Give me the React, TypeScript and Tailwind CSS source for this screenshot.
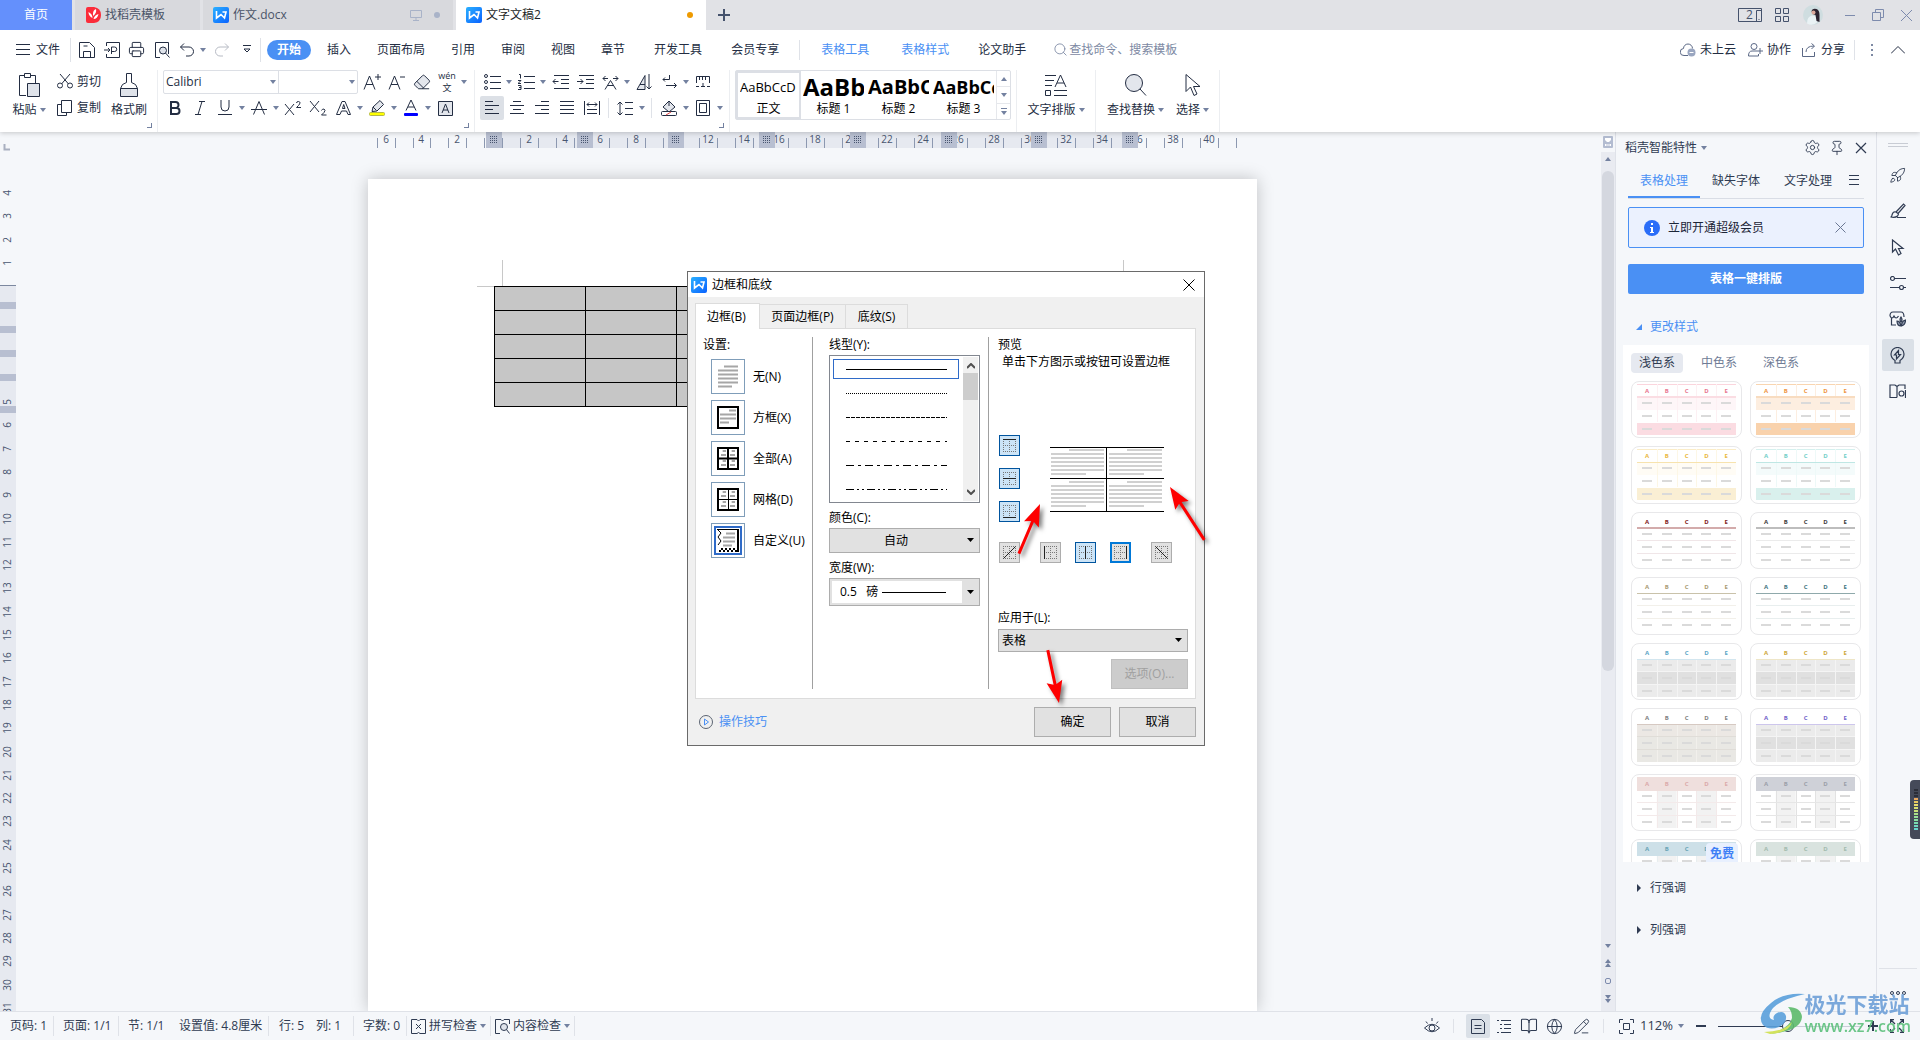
import type { ReactNode } from 'react'
import {
  BookOpen, Eraser, Globe, PencilLine, Pin, Printer, Rocket, Search, Settings,
} from 'lucide-react'
import clsx from 'clsx'

const menus = ['插入', '页面布局', '引用', '审阅', '视图', '章节']

const styleCells = [
  { sample: 'AaBbCcD', label: '正文', font: 'text-[13px]' },
  { sample: 'AaBb', label: '标题 1', font: 'text-2xl font-bold' },
  { sample: 'AaBbC', label: '标题 2', font: 'text-xl font-bold' },
  { sample: 'AaBbCc', label: '标题 3', font: 'text-lg font-bold' },
]

type Theme = {
  text: string
  rule: string
  ruleH?: number
  top?: string
  head?: string
  rows?: string[]
  h?: string
  v?: string
  cols?: string
}

const themes: Theme[] = [
  { text: '#e8758f', rule: '#fbdde3', ruleH: 2, top: '#fbd5dd', rows: ['#fef6f8', '#ffffff', '#fbdce2'], v: '#fdf0f3' },
  { text: '#ee9440', rule: '#f8dcc0', ruleH: 2, top: '#f9d5b0', rows: ['#fdeee0', '#ffffff', '#f9d2ac'], v: '#fdeee0' },
  { text: '#e9b840', rule: '#f7e3ae', top: '#faecc8', rows: ['#fffcf5', '#ffffff', '#faefd4'], v: '#fdf7e6' },
  { text: '#74cfc8', rule: '#bfe7e4', top: '#d5f0ee', rows: ['#f4fbfb', '#ffffff', '#d9f0ed'], v: '#eef9f8' },
  { text: '#801818', rule: '#d3abab', ruleH: 2, h: '#f0e6e8' },
  { text: '#3c3c3c', rule: '#bdbdbd', ruleH: 2, h: '#ebebeb' },
  { text: '#a89a72', rule: '#c9c2aa', h: '#f2f0ea' },
  { text: '#3f7580', rule: '#8fa9ab', h: '#e8eeee' },
  { text: '#5aa5c6', rule: '#d3e6ef', rows: ['#ebebeb', '#e0e0e0', '#ebebeb'], v: '#f4f4f4', h: '#f4f4f4' },
  { text: '#cda73a', rule: '#eee6c8', rows: ['#ebebeb', '#e0e0e0', '#ebebeb'], v: '#f4f4f4', h: '#f4f4f4' },
  { text: '#7e7e7e', rule: '#d6c9c2', rows: ['#ece8e4', '#e9e8e4', '#e9e8e4'], v: '#f2f0ec', h: '#e0ddd8' },
  { text: '#7161c8', rule: '#cdc6ec', rows: ['#ebebeb', '#e0e0e0', '#ebebeb'], v: '#f4f4f4', h: '#f4f4f4' },
  { text: '#dbaaaa', rule: '#efdfdd', head: '#efdfdd', h: '#f3eaea', v: '#f3eaea', cols: '#f2f2f2' },
  { text: '#9b9fa8', rule: '#cfd1d8', head: '#cfd1d8', h: '#e6e6e6', v: '#e2e2e2', cols: '#f2f2f2' },
  { text: '#68a3b5', rule: '#cde0e8', head: '#cde0e8', h: '#e8eef0', v: '#e8eef0', cols: '#f2f2f2' },
  { text: '#a3bbae', rule: '#d9e3df', head: '#d9e3df', h: '#e8eeec', v: '#e8eeec', cols: '#f2f2f2' },
]

function Svg({ w = 18, h = 18, sw = 1, className, children }: { w?: number; h?: number; sw?: number; className?: string; children: ReactNode }) {
  return (
    <svg width={w} height={h} viewBox={`0 0 ${w} ${h}`} fill="none" stroke="currentColor" strokeWidth={sw} className={clsx('shrink-0', className)}>
      {children}
    </svg>
  )
}

function Caret({ className }: { className?: string }) {
  return (
    <svg width="6" height="4" viewBox="0 0 6 4" className={clsx('shrink-0 text-[#7381a0]', className)}>
      <path d="M0 0h6L3 4z" fill="currentColor" />
    </svg>
  )
}

function Divider({ className }: { className?: string }) {
  return <span className={clsx('w-px shrink-0 bg-[#dfe2e8]', className)} />
}

function WpsLogo() {
  return (
    <svg width="16" height="16" viewBox="0 0 16 16" className="shrink-0">
      <defs>
        <linearGradient id="wps" x1="0" y1="0" x2="1" y2="1">
          <stop offset="0" stopColor="#2bb0ff" />
          <stop offset="1" stopColor="#0a62ff" />
        </linearGradient>
      </defs>
      <rect width="16" height="16" rx="2" fill="url(#wps)" />
      <path d="M3.500 4v7L8 7.500l3.500 3.500L13 5H9.500" fill="none" stroke="#fff" strokeWidth="1.600" />
    </svg>
  )
}

function Tool({ label, caret, active, children }: { label: string; caret?: boolean; active?: boolean; children: ReactNode }) {
  return (
    <button aria-label={label} className="flex h-6 shrink-0 items-center">
      <span className={clsx('flex h-6 w-6 items-center justify-center rounded-xs', active && 'bg-[#dce0e6]')}>{children}</span>
      {caret && <span className="flex w-[9px] justify-center"><Caret /></span>}
    </button>
  )
}

function Corner() {
  return (
    <div className="flex justify-end pt-[3px]">
      <span className="h-[5px] w-[5px] border-r border-b border-[#7381a0]" />
    </div>
  )
}

function TitleBar() {
  return (
    <div className="flex h-[30px] bg-[#e1e2e6]">
      <button className="w-[72px] bg-[#6490fc] text-white">首页</button>
      <button className="ml-[3px] flex w-[125px] items-center gap-1 bg-[#d8d9dd] pl-[11px] text-[#4a5468]">
        <svg width="15" height="16" viewBox="0 0 15 16">
          <path d="M0 2q0-2 2-2h6q7 1 7 8t-7 8H2q-2 0-2-2z" fill="#fb2c3a" />
          <path d="M7 13V7q0-4 3-5 1 4-3 7M6.500 11Q2.500 9 2.500 5q4 2 4 6M7.500 12q4 0 5-5-4 1-5 5" fill="#fff" />
        </svg>
        找稻壳模板
      </button>
      <button className="ml-[3px] flex w-[250px] items-center gap-1 bg-[#d8d9dd] pl-[10px] text-[#4a5468]">
        <WpsLogo />
        作文.docx
        <span className="flex-1" />
        <Svg w={12} h={12} className="text-[#a9b3c8]">
          <path d="M.5 1.500h11v7H.5zM6 8.500v3M3 11.500h6" />
        </Svg>
        <span className="mr-[13px] ml-2 h-1.5 w-1.5 rounded-full bg-[#a9b3c8]" />
      </button>
      <button className="ml-[3px] flex w-[250px] items-center gap-1 bg-white pl-[10px] text-[#1c1f27]">
        <WpsLogo />
        文字文稿2
        <span className="flex-1" />
        <span className="mr-[13px] h-1.5 w-1.5 rounded-full bg-[#ee9a00]" />
      </button>
      <button aria-label="新建" className="ml-3 text-[#45526c]">
        <Svg w={12} h={12} sw={2}><path d="M6 0v12M0 6h12" /></Svg>
      </button>
      <div className="ml-auto flex items-center text-[#45526c]">
        <button aria-label="双页" className="relative mr-3">
          <Svg w={25} h={15}><path d="M.5.5h23v13H.5zM23.500 2.500h-5v11M20.500 11.500h1" /></Svg>
          <span className="absolute top-0 left-2 text-xs leading-[14px]">2</span>
        </button>
        <button aria-label="应用" className="mr-[14px]">
          <Svg w={14} h={14}><path d="M.5.5h5v5h-5zM8.500.5h5v5h-5zM.5 8.500h5v5h-5zM8.500 8.500h5v5h-5z" /></Svg>
        </button>
        <svg width="20" height="20" viewBox="0 0 20 20">
          <circle cx="10" cy="10" r="10" fill="#cfdde0" />
          <path d="M4 18.500q0-7 5-8l5 1v6q-5 4-10 1" fill="#eaf2f5" />
          <path d="M8.500 6q1-3 5-2 3 1 3 6v7l-3-1-1-6-3-1z" fill="#2c2330" />
          <circle cx="10.500" cy="7.500" r="2" fill="#dca99b" />
        </svg>
        <Divider className="mr-[8px] ml-[9px] h-5 bg-[#c9ccd3]" />
        <button aria-label="最小化" className="mx-1 text-[#7d8bad]"><Svg w={10} h={12}><path d="M0 6.500h10" /></Svg></button>
        <button aria-label="还原" className="ml-[13px] text-[#7d8bad]"><Svg w={12} h={12}><path d="M.5 3.500h8v8h-8zM3.500 3.500v-3h8v8h-3" /></Svg></button>
        <button aria-label="关闭" className="mr-2 ml-[17px] text-[#7d8bad]"><Svg w={11} h={11}><path d="m0 0 11 11M11 0 0 11" /></Svg></button>
      </div>
    </div>
  )
}

function MenuBar() {
  return (
    <div className="flex h-9 items-center pt-[3px]">
      <button className="flex items-center gap-[6px] pl-4">
        <Svg w={14} h={12}><path d="M0 .5h14M0 5.500h14M0 10.500h14" /></Svg>
        文件
      </button>
      <Divider className="ml-[10px] h-6" />
      <div className="flex items-center">
        <button aria-label="保存" className="ml-2"><Svg w={16} h={16}><path d="M.5.5h10l5 5v10H.5zM4.500 15.500v-6h7v6M4.500 4h4" /></Svg></button>
        <button aria-label="输出为PDF" className="ml-[9px]"><Svg w={16} h={16}><path d="M2.500 4V.5h13v15h-13V12M0 8h6M4 6l2 2-2 2M7.500 12V5h3a2 2 0 0 1 0 4.500H7.500" /></Svg></button>
        <button aria-label="打印" className="ml-2"><Printer size={17} strokeWidth={1.4} /></button>
        <button aria-label="打印预览" className="ml-[10px]"><Svg w={16} h={16}><path d="M5 15.500H.5V.5h13V12" /><circle cx="8" cy="8.500" r="3.500" fill="#dfe3ea" /><path d="m10.500 11 4 4.500" /></Svg></button>
        <button aria-label="撤销" className="ml-[9px] flex items-center gap-1.5">
          <Svg w={14} h={14}><path d="M4 .5.5 4 4 7.500M.5 4H9a4.500 4.500 0 0 1 0 9H6" /></Svg>
          <Caret />
        </button>
        <button aria-label="恢复" className="ml-[9px] text-[#b7bbc4]"><Svg w={14} h={14}><path d="M10 .5 13.500 4 10 7.500M13.500 4H5a4.500 4.500 0 0 0 0 9h3" /></Svg></button>
        <button aria-label="更多" className="ml-[14px]"><Svg w={8} h={9}><path d="M0 .5h8M1 4l3 3 3-3z" /></Svg></button>
      </div>
      <Divider className="mr-[6px] ml-[9px] h-6" />
      <button className="h-5 w-11 rounded-full bg-[#4a90f4] font-bold text-white">开始</button>
      <nav className="ml-[3px] flex">
        {menus.map((m) => <button key={m} className="px-[13px]">{m}</button>)}
        <button className="px-4">开发工具</button>
        <button className="pr-5 pl-[13px]">会员专享</button>
      </nav>
      <Divider className="h-5" />
      <button className="ml-[21px] text-[#4a90f4]">表格工具</button>
      <button className="ml-8 text-[#4a90f4]">表格样式</button>
      <button className="ml-[29px]">论文助手</button>
      <label className="ml-[27px] flex items-center gap-px text-[#7d89a3]">
        <Search size={15} strokeWidth={1.4} />
        <input aria-label="搜索" placeholder="查找命令、搜索模板" className="w-32 bg-transparent outline-none placeholder:text-[#7d89a3]" />
      </label>
      <div className="ml-auto flex items-center">
        <button className="flex items-center gap-1">
          <Svg w={16} h={14} className="text-[#5b6885]">
            <path d="M8 12.500H4a3.500 3.500 0 0 1-.5-7 4.500 4.500 0 0 1 9 0" />
            <circle cx="11.500" cy="9.500" r="4" fill="#9aa6c0" stroke="none" />
            <path d="M9.500 9.500h4" stroke="#fff" />
          </Svg>
          未上云
        </button>
        <button className="ml-3 flex items-center gap-1">
          <Svg w={15} h={14} className="text-[#5b6885]"><circle cx="6" cy="3.500" r="3" /><path d="M9 8H4Q.5 8 .5 13h10v-2M12 5v6M9 8h6" /></Svg>
          协作
        </button>
        <button className="ml-[11px] flex items-center gap-1">
          <Svg w={15} h={14} className="text-[#5b6885]"><path d="M.5 5v8.500h12V9M4 9q0-6 8-6M9.500.5 12.500 3l-3 3" /></Svg>
          分享
        </button>
        <Divider className="ml-[9px] h-5" />
        <button aria-label="菜单" className="ml-4 flex flex-col gap-[3px]">
          <i className="h-0.5 w-0.5 bg-[#7d89a3]" /><i className="h-0.5 w-0.5 bg-[#7d89a3]" /><i className="h-0.5 w-0.5 bg-[#7d89a3]" />
        </button>
        <button aria-label="折叠" className="mr-[15px] ml-[18px]"><Svg w={14} h={8}><path d="m0 7.500 7-7 7 7" /></Svg></button>
      </div>
    </div>
  )
}

function Lines({ x1, x2 }: { x1: number[]; x2: number[] }) {
  return (
    <Svg w={14} h={14}>
      {x1.map((x, i) => <path key={i} d={`M${x} ${i * 4 + 0.5}H${x2[i]}`} />)}
    </Svg>
  )
}

function Ribbon() {
  return (
    <div className="flex h-[66px] overflow-hidden pt-1">
      <div className="flex w-[158px] shrink-0 flex-col border-r border-[#eceef1] pr-[5px] pb-1">
        <div className="flex h-[50px]">
          <button className="ml-[12px] flex w-[34px] flex-col items-center pt-[3px]">
            <Svg w={22} h={24}>
              <path d="M7 2.500H1.500v20H8M13 2.500h4.500V10M6.500.5h6v4h-6z" />
              <path d="M9.500 10.500h12v13h-12z" fill="#dfe3ea" />
            </Svg>
            <span className="mt-[5px] flex items-center gap-[3px] leading-4">粘贴<Caret /></span>
          </button>
          <div className="ml-[11px] flex flex-col gap-[3px]">
            <button className="flex h-6 items-center gap-1">
              <Svg w={16} h={15}><path d="M3 0l8.500 10M13 0 4.500 10" /><circle cx="3" cy="11.500" r="2.500" /><circle cx="13" cy="11.500" r="2.500" /></Svg>
              剪切
            </button>
            <button className="flex h-6 items-center gap-1">
              <Svg w={16} h={16}><path d="M4.500.5h10v12h-10zM4.500 4.500h-4v11h9v-3" /></Svg>
              复制
            </button>
          </div>
          <button className="ml-[10px] flex flex-col items-center pt-[3px]">
            <Svg w={18} h={24}>
              <path d="M6.500 9.500v-9h5v9q5 1 6 6H.5q1-5 6-6z" />
              <path d="M.5 15.500h17v8H.5z" fill="#dfe3ea" />
            </Svg>
            <span className="mt-[5px] leading-4">格式刷</span>
          </button>
        </div>
        <Corner />
      </div>

      <div className="w-[317px] shrink-0 border-r border-[#eceef1] px-[5px]">
        <div className="flex">
          <div className="flex h-6 rounded-xs border border-[#dcdfe5]">
            <label className="flex w-[115px] items-center border-r border-[#dcdfe5]">
              <input aria-label="字体" defaultValue="Calibri" className="min-w-0 flex-1 pl-0.5 outline-none" />
              <Caret className="mr-0.5" />
            </label>
            <label className="flex w-[78px] items-center">
              <input aria-label="字号" className="min-w-0 flex-1 pl-1 outline-none" />
              <Caret className="mr-0.5" />
            </label>
          </div>
          <div className="ml-0.5 flex gap-px">
            <Tool label="增大字号"><Svg><path d="M1 16.500 6.500 3 12 16.500M3 11.500h7M15 1v6M12 4h6" /></Svg></Tool>
            <Tool label="减小字号"><Svg><path d="M1 16.500 6.500 3 12 16.500M3 11.500h7M12 4h5" /></Svg></Tool>
            <Tool label="清除格式"><Eraser size={18} strokeWidth={1.3} fill="#e3e6ec" /></Tool>
            <Tool label="拼音" caret>
              <span className="flex flex-col items-center text-[9px] leading-[12px]"><span>wén</span><span>文</span></span>
            </Tool>
          </div>
        </div>
        <div className="mt-0.5 flex gap-px">
          <Tool label="加粗"><Svg w={12} h={14} sw={2}><path d="M2 1h4.500a3 3 0 0 1 0 6H2zM2 7h5.500a3 3 0 0 1 0 6H2z" /></Svg></Tool>
          <Tool label="倾斜"><Svg w={10} h={14}><path d="M4 .5h6M0 13.500h6M7 .5l-4 13" /></Svg></Tool>
          <Tool label="下划线" caret><Svg w={14} h={16}><path d="M3 0v7q0 4 4 4t4-4V0M0 14.500h14" /></Svg></Tool>
          <Tool label="删除线" caret><Svg w={16} h={14}><path d="M2.500 13.500 8 .5l5.500 13M0 8.500h16" /></Svg></Tool>
          <Tool label="上标"><Svg w={18} h={15}><path d="m1 3 9 11M10 3 1 14M12.500 2q0-1.500 2-1.500 3 .5 0 4l-2 2h4.500" /></Svg></Tool>
          <Tool label="下标"><Svg w={18} h={16}><path d="m1 1 9 11M10 1 1 12M12.500 10.500Q13 9 15 9q2 1 0 3.500l-2.500 2.500h5" /></Svg></Tool>
          <Tool label="文字效果" caret><Svg w={15} h={14}><path d="M.5 13.500 6 .5h3l5.500 13H12L10.500 10h-5L4 13.500zM6.500 7.500h2.500L7.700 3.500z" /></Svg></Tool>
          <Tool label="突出显示" caret>
            <Svg w={16} h={17}>
              <path d="M3 11.500 4 7l7-6.500 3.500 4L8 11zM4 7l3.500 3.500" fill="#e3e6ec" />
              <rect x=".5" y="12.500" width="15" height="3" rx="1" fill="#ffff00" stroke="#b5b84a" />
            </Svg>
          </Tool>
          <Tool label="字体颜色" caret>
            <Svg w={14} h={16}><path d="M2 10.500 7 0l5 10.500M4 7h6" /><rect y="13" width="14" height="3" rx="1" fill="#0000ff" stroke="none" /></Svg>
          </Tool>
          <Tool label="字符底纹"><Svg w={15} h={15}><path d="M.5.5h14v14H.5z" fill="#e3e6ec" /><path d="m4 12 3.500-9L11 12M5 9h5" /></Svg></Tool>
        </div>
        <Corner />
      </div>

      <div className="w-[255px] shrink-0 border-r border-[#eceef1] px-[5px]">
        <div className="flex gap-px">
          <Tool label="项目符号" caret>
            <Svg w={17} h={16}><circle cx="2" cy="2" r="1.500" /><circle cx="2" cy="8" r="1.500" /><circle cx="2" cy="14" r="1.500" /><path d="M6 2.500h11M6 8.500h11M6 14.500h11" /></Svg>
          </Tool>
          <Tool label="编号" caret>
            <Svg w={17} h={16}><path d="M1 .5h1.500v4M0 6.500h3l-3 3h3M0 11.500h3v4H0M1 13.500h2M6 2.500h11M6 8.500h11M6 14.500h11" /></Svg>
          </Tool>
          <Tool label="减少缩进"><Svg w={17} h={14}><path d="M2 .5h15M9 4.500h8M9 8.500h8M2 13.500h15M6.500 6.500H1M3.500 4 1 6.500 3.500 9" /></Svg></Tool>
          <Tool label="增加缩进"><Svg w={17} h={14}><path d="M2 .5h15M9 4.500h8M9 8.500h8M2 13.500h15M0 6.500h6M3.500 4 6 6.500 3.500 9" /></Svg></Tool>
          <Tool label="中文版式" caret><Svg w={17} h={15}><path d="M1 3.500h5M11 3.500h5M3.500 1 1 3.500 3.500 6M13.500 1 16 3.500 13.500 6M3 14.500l5.500-9 5.500 9M5.500 10.500h6" /></Svg></Tool>
          <Tool label="排序"><Svg w={16} h={16}><path d="M1 15.500h8v-14zM4 10.500h5" fill="#e3e6ec" /><path d="M13 0v15M10.500 12.500l2.500 2.500 2.500-2.500" /></Svg></Tool>
          <Tool label="换行" caret><Svg w={15} h={14}><path d="M7.500 0v4.500H1M3 2.500l-2 2 2 2M4 10.500h10M12 8l2.500 2.500L12 13" /></Svg></Tool>
          <Tool label="制表位"><Svg w={14} h={12}><path d="M.5 7V.5h13V7M3.500 1v3M6.500 1v3M9.500 1v3M0 10.500h3M5 10.500h4M11 10.500h3M7 10V7" /></Svg></Tool>
        </div>
        <div className="mt-0.5 flex items-center gap-px">
          <Tool label="左对齐" active><Lines x1={[0, 0, 0, 0]} x2={[8, 14, 8, 14]} /></Tool>
          <Tool label="居中"><Lines x1={[3, 0, 3, 0]} x2={[11, 14, 11, 14]} /></Tool>
          <Tool label="右对齐"><Lines x1={[6, 0, 6, 0]} x2={[14, 14, 14, 14]} /></Tool>
          <Tool label="两端对齐"><Lines x1={[0, 0, 0, 0]} x2={[14, 14, 14, 14]} /></Tool>
          <Tool label="分散对齐"><Svg w={16} h={14}><path d="M.5 0v14M15.500 0v14M3 3.500h10M5 1.500l-2 2 2 2M11 1.500l2 2-2 2M3 8.500h10M3 12.500h10" /></Svg></Tool>
          <Divider className="mx-[3px] h-5" />
          <Tool label="行距" caret><Svg w={16} h={15}><path d="M3 1v13M.5 3.500 3 1l2.500 2.500M.5 11.500 3 14l2.500-2.500M8 1.500h8M8 7.500h8M8 13.500h8" /></Svg></Tool>
          <Divider className="mx-1 h-5" />
          <Tool label="底纹颜色" caret>
            <Svg w={17} h={16}><path d="m2 7 6-6 6 6-6 5zM8 1v5" fill="#e3e6ec" /><rect x=".5" y="11.500" width="15" height="4" rx="1" fill="#fff" /><path d="m5 15 5-3" stroke="#e04848" /></Svg>
          </Tool>
          <Tool label="边框" caret><Svg w={14} h={16}><path d="M.5.5h13v15H.5z" /><path d="M3.500 3.500h7v9h-7z" /></Svg></Tool>
        </div>
        <Corner />
      </div>

      <div className="shrink-0 border-r border-[#eceef1] px-[5px]">
        <div className="flex h-[50px] rounded-xs border border-[#dcdfe5] text-black">
          {styleCells.map((s, i) => (
            <button key={s.label} className={clsx('flex w-[65px] flex-col items-center px-0.5', i === 0 && 'border-2 border-[#dcdfe5] px-0')}>
              <span className={clsx('w-full overflow-hidden text-left whitespace-nowrap', i === 0 ? 'h-7 leading-7' : 'h-[30px] leading-8', s.font)}>{s.sample}</span>
              <span className="leading-4">{s.label}</span>
            </button>
          ))}
          <div className="flex w-[14px] flex-col divide-y divide-[#e6e8ec] border-l border-[#e6e8ec]">
            <button aria-label="上一行" className="flex flex-1 items-center justify-center"><Caret className="rotate-180" /></button>
            <button aria-label="下一行" className="flex flex-1 items-center justify-center"><Caret /></button>
            <button aria-label="更多样式" className="flex flex-1 flex-col items-center justify-center gap-0.5"><i className="h-px w-1.5 bg-[#7381a0]" /><Caret /></button>
          </div>
        </div>
      </div>

      <div className="flex h-[62px] w-[79px] shrink-0 justify-center border-r border-[#eceef1]">
        <button className="flex flex-col items-center pt-1">
          <Svg w={24} h={22}><path d="M1 1.500h11M1 6.500h9M1 11.500h7M1.500 16.500h5v5h-5zM10 16.500h13M10 21.500h13M11 13l5.500-12L22 13M13 9h7" /></Svg>
          <span className="mt-[6px] flex items-center gap-[3px] leading-4">文字排版<Caret /></span>
        </button>
      </div>
      <div className="flex h-[62px] shrink-0 gap-3 border-r border-[#eceef1] pr-[10px] pl-[11px]">
        <button className="flex flex-col items-center pt-1">
          <Svg w={23} h={22}><circle cx="10" cy="9" r="8.500" fill="#e3e6ec" /><path d="m16 15 6 6.500" /></Svg>
          <span className="mt-[6px] flex items-center gap-[3px] leading-4">查找替换<Caret /></span>
        </button>
        <button className="flex flex-col items-center pt-1">
          <Svg w={16} h={22}><path d="M1 .5v17l4.500-4.500L9 21.500l3-1.500-3.500-7.500H15z" /></Svg>
          <span className="mt-[6px] flex items-center gap-[3px] leading-4">选择<Caret /></span>
        </button>
      </div>
    </div>
  )
}

function HorizontalRuler() {
  const step = 17.9
  const ticks = Array.from({ length: 49 }, (_, i) => i - 7)
  return (
    <svg width="889" height="16" className="block">
      <rect x="134" width="622" height="16" fill="#e6e9f0" />
      {ticks.map((t) => (
        <rect key={t} x={Math.round(134 + t * step)} y="6" width="1" height="10" fill="#8c98b0" />
      ))}
      {ticks.map((t) => t % 2 === 0 && t !== 0 && t !== 10 && t < 41 && (
        <text key={t} x={Math.round(125 + t * step)} y="11" textAnchor="middle" fontSize="10" fill="#48556f">{Math.abs(t)}</text>
      ))}
      {Array.from({ length: 8 }, (_, i) => Math.round(118 + i * 90.9)).map((x) => (
        <g key={x}>
          <rect x={x} width="16" height="16" fill="#b8bfd1" />
          {[5, 7, 9, 11].map((y) => (
            <path key={y} d={`M${x + 4} ${y - 0.5}h8`} stroke="#48556f" strokeDasharray="1 1" />
          ))}
        </g>
      ))}
    </svg>
  )
}

function VerticalRuler() {
  const marks = [
    ...[4, 3, 2, 1].map((n) => ({ n, y: 131 - Math.round((n - 1) * 23.3) })),
    ...Array.from({ length: 27 }, (_, i) => ({ n: i + 5, y: Math.round(270 + i * 23.3) })),
  ]
  return (
    <svg width="16" className="block h-full shrink-0">
      <path d="M4.500 12v5.500H10" stroke="#a9b0c0" strokeWidth="2" fill="none" />
      <rect y="153" width="16" height="100%" fill="#e6e9f0" />
      <rect y="153" width="16" height="1" fill="#7c889f" />
      {[170, 194, 218, 242, 274].map((y) => <rect key={y} y={y} width="16" height="7" fill="#b8bfd1" />)}
      {marks.map((m) => (
        <text key={m.n} transform={`translate(11 ${m.y}) rotate(-90)`} textAnchor="middle" fontSize="10" fill="#48556f">{m.n}</text>
      ))}
    </svg>
  )
}

function DocumentArea() {
  return (
    <div className="flex min-w-0 flex-1 justify-center overflow-hidden pl-2">
      <div className="flex w-[889px] shrink-0 flex-col">
        <HorizontalRuler />
        <div className="mt-[31px] flex-1 bg-white pt-[81px] shadow-[0_0_16px_rgba(0,0,0,0.22)]">
          <div className="mr-[133px] ml-[134px] h-[26px] border-x border-[#c8c8c8]" />
          <div className="flex">
            <div className="ml-[109px] w-[17px] border-t border-[#c8c8c8]" />
            <table className="table-fixed border-collapse bg-[#c6c6c6]">
              <tbody>
                {[0, 1, 2, 3, 4].map((r) => (
                  <tr key={r}>
                    {[0, 1, 2, 3, 4, 5, 6].map((c) => <td key={c} className="h-6 w-[91px] min-w-[91px] border border-black p-0" />)}
                  </tr>
                ))}
              </tbody>
            </table>
          </div>
        </div>
      </div>
    </div>
  )
}

function ScrollBar() {
  return (
    <div className="flex w-[14px] shrink-0 flex-col items-center bg-[#e9ebf1] text-[#7d8bad]">
      <div className="flex h-5 w-full items-center justify-center bg-[#f5f7fa]">
        <svg width="10" height="12"><rect width="10" height="12" rx="1" fill="#b3bcd1" /><path d="M2 2h6v2L6 6H4L2 4zM2 8h1.500v2H2zM4.500 8h1v2h-1zM6.500 8H8v2H6.500z" fill="#fff" /></svg>
      </div>
      <Caret className="mt-[5px] rotate-180" />
      <div className="mt-[10px] h-[500px] w-3 rounded-full bg-[#d4d7df]" />
      <div className="mt-auto flex flex-col items-center gap-[11px] pb-2">
        <Caret />
        <span className="flex flex-col"><Caret className="rotate-180" /><Caret className="rotate-180" /></span>
        <span className="h-1.5 w-1.5 rounded-xs border border-[#7d8bad]" />
        <span className="flex flex-col"><Caret /><Caret /></span>
      </div>
    </div>
  )
}

function Thumb({ t }: { t: Theme }) {
  const w = 99 / 5
  return (
    <svg width="99" height="51" className="block">
      {t.head && <rect width="99" height="13" fill={t.head} />}
      {t.rows?.map((c, i) => <rect key={i} y={13 + i * 13} width="99" height={i === 2 ? 12 : 13} fill={c} />)}
      {t.cols && [1, 3].map((c) => <rect key={c} x={c * w} y="13" width={w} height="38" fill={t.cols} />)}
      {t.top && <rect width="99" height="1" fill={t.top} />}
      {t.v && [1, 2, 3, 4].map((c) => <rect key={c} x={Math.round(c * w)} y={t.rows && !t.h ? 0 : 13} width="1" height="38" fill={t.v} />)}
      {t.h && [25, 38].map((y) => <rect key={y} y={y} width="99" height="1" fill={t.h} />)}
      <rect y={t.ruleH ? 12 : 13} width="99" height={t.ruleH ?? 1} fill={t.rule} />
      {[0, 1, 2, 3, 4].map((c) => (
        <g key={c}>
          <text x={10 + c * w} y="9" textAnchor="middle" fontSize="6" fontWeight="700" fill={t.text}>{'ABCDE'[c]}</text>
          {[18, 31, 44].map((y) => <rect key={y} x={Math.round(5 + c * w)} y={y} width="10" height="2" fill="#dadada" />)}
        </g>
      ))}
    </svg>
  )
}

function TaskPane() {
  return (
    <aside className="flex w-[262px] shrink-0 flex-col border-x border-[#dfe2e9] text-[#2f3b52]">
      <div className="flex h-[30px] items-center px-[9px] pt-px">
        <button className="flex items-center gap-1">稻壳智能特性<Caret /></button>
        <button aria-label="设置" className="ml-auto"><Settings size={17} strokeWidth={1.3} /></button>
        <button aria-label="固定" className="ml-2"><Pin size={16} strokeWidth={1.4} /></button>
        <button aria-label="关闭" className="ml-[10px]"><Svg w={12} h={12} sw={1.2}><path d="m1 1 10 10M11 1 1 11" /></Svg></button>
      </div>
      <div className="mx-3 flex h-[37px] items-stretch border-b border-[#d9dde5] leading-[37px]">
        <button className="w-[72px] border-b-2 border-[#4a90f4] text-[#4a90f4]">表格处理</button>
        <button className="w-[72px]">缺失字体</button>
        <button className="w-[72px]">文字处理</button>
        <button aria-label="更多" className="pl-[5px]"><Svg w={10} h={10}><path d="M0 .5h10M0 4.500h10M0 9.500h10" /></Svg></button>
      </div>
      <div className="mx-3 mt-2 flex h-[41px] items-center rounded-xs border border-[#4a90f4] bg-[#ebf1fe] pl-[15px] text-[#1c2537]">
        <span className="mr-2 flex h-4 w-4 items-center justify-center rounded-full bg-[#2a6df8] text-white">
          <svg width="4" height="10"><path d="M1 0h2v2H1zM0 4h3v5h1v1H0V9h1V5H0z" fill="#fff" /></svg>
        </span>
        立即开通超级会员
        <button aria-label="关闭提示" className="mr-[17px] ml-auto text-[#6b7894]"><Svg w={11} h={11}><path d="m.5.5 10 10M10.500.5l-10 10" /></Svg></button>
      </div>
      <button className="mx-3 mt-4 h-[30px] rounded-xs bg-[#4a90f4] font-bold text-white">表格一键排版</button>
      <button className="mt-[23px] ml-5 flex h-5 items-center gap-2 text-[#4a90f4]">
        <svg width="6" height="6"><path d="M6 0v6H0z" fill="currentColor" /></svg>
        更改样式
      </button>
      <div className="mx-[7px] mt-2 h-[517px] overflow-hidden bg-white px-2 pt-2">
        <div className="flex h-5 leading-5 text-[#6f7c96]">
          <button className="w-[52px] rounded-sm bg-[#e6e9f0] text-[#2f3b52]">浅色系</button>
          <button className="ml-[18px]">中色系</button>
          <button className="ml-[26px]">深色系</button>
        </div>
        <div className="mt-2 grid grid-cols-2 gap-2">
          {themes.map((t, i) => (
            <button key={i} aria-label={`样式 ${i + 1}`} className={clsx('relative flex justify-center rounded-lg border border-[#e8e8ea] pt-0.5', i % 4 < 2 ? 'h-[57px]' : 'h-[58px]')}>
              <Thumb t={t} />
              {i === 14 && <span className="absolute top-[3px] right-[3px] h-[22px] w-8 rounded-sm bg-[#e8f0fe] leading-[21px] font-bold text-[#3f80f6]">免费</span>}
            </button>
          ))}
        </div>
      </div>
      {['行强调', '列强调'].map((label) => (
        <button key={label} className="mt-4 mb-[6px] ml-[21px] flex h-5 items-center gap-[9px]">
          <svg width="4" height="8"><path d="M0 0v8l4-4z" fill="currentColor" /></svg>
          {label}
        </button>
      ))}
    </aside>
  )
}

function SideStrip() {
  const cls = 'flex h-8 w-8 items-center justify-center rounded-xs'
  return (
    <div className="flex w-[43px] shrink-0 flex-col items-center pr-0.5 text-[#2f3b52]">
      <div className="mt-[11px] h-1 w-5 border-y border-[#c8ccd4]" />
      <div className="mt-3 flex flex-col gap-1">
        <button aria-label="快捷" className={cls}><Rocket size={17} strokeWidth={1.3} /></button>
        <button aria-label="画笔" className={cls}>
          <Svg w={16} h={16} sw={1.2}><path d="M6 9 13.500 1 15 2.500 8 10.500M6 9q-3-1-4 3 0 2-1.500 2 5 1 7-1 1.500-1.500.5-2.500zM7 14.500h9" /></Svg>
        </button>
        <button aria-label="选择" className={cls}>
          <Svg w={14} h={17} sw={1.2}><path d="M1.500 1v12l3-3 3 6 2.500-1.500-2.500-5H12z" /></Svg>
        </button>
        <button aria-label="属性" className={cls}>
          <Svg w={16} h={14} sw={1.2}><circle cx="2.500" cy="2.500" r="2" /><path d="M4.500 2.500H16M0 11.500h9M14 11.500h2" /><circle cx="11.500" cy="11.500" r="2" /></Svg>
        </button>
        <button aria-label="稻壳资源" className={cls}>
          <Svg w={17} h={16} sw={1.2}><path d="M2.500 7v7H7M1 5q0-4 3-4h8q3 0 3 5M1 5q2 4 4 0 2 4 4.500 0" /><path d="M8 10q3 0 4 5-4 0-4-5zM16.500 9q-4 1-4 6 4-1 4-6zM12 6q-2 3 0 5 2-2 0-5z" fill="#8f99ad" /></Svg>
        </button>
        <button aria-label="智能特性" className={clsx(cls, 'bg-[#dae0e7]')}>
          <Svg w={15} h={17} sw={1.2}><path d="M5 13.500Q1 11 1 7a6.500 6.500 0 0 1 13 0q0 4-4 6.500v2.500H5zM8.500 3.500 4.500 8h2v4l4-4.500h-2z" /></Svg>
        </button>
        <button aria-label="查找资料" className={cls}>
          <Svg w={17} h={15} sw={1.2}><path d="M8 13.500H1V1h5l2 1.500L10 1h6v4M8 2.500v11" /><circle cx="12.500" cy="9.500" r="2.500" /><path d="M16.500 6v8" /></Svg>
        </button>
      </div>
      <div className="mt-auto h-px w-[38px] bg-[#dfe2e8]" />
      <button aria-label="更多" className="mt-[22px] mb-4 flex gap-0.5">
        <i className="h-1 w-1 rounded-full border border-[#2f3b52]" /><i className="h-1 w-1 rounded-full border border-[#2f3b52]" /><i className="h-1 w-1 rounded-full border border-[#2f3b52]" />
      </button>
    </div>
  )
}

function StatusBar() {
  return (
    <footer className="flex h-[29px] shrink-0 items-center border-t border-[#dfe2e8] bg-[#f5f7fa] whitespace-nowrap text-[#2f3b52]">
      <span className="ml-[10px] w-[43px]">页码: 1</span>
      <Divider className="h-5" />
      <span className="ml-[9px] w-[55px]">页面: 1/1</span>
      <Divider className="h-5" />
      <span className="ml-[9px] w-[51px]">节: 1/1</span>
      <span className="w-[89px]">设置值: 4.8厘米</span>
      <Divider className="h-5" />
      <span className="ml-[10px] w-[37px]">行: 5</span>
      <span className="w-[37px]">列: 1</span>
      <Divider className="h-5" />
      <span className="ml-[9px] w-[43px]">字数: 0</span>
      <Divider className="h-5" />
      <button className="mx-1 flex items-center gap-[3px]">
        <Svg w={15} h={15}><path d="M6 .5H.5v14H6l1.500-1 1.500 1h5.500V.5H9L7.500 2zM5 5l5 5M10 5l-5 5" /></Svg>
        拼写检查<Caret />
      </button>
      <Divider className="h-5" />
      <button className="mx-1 flex items-center gap-[3px]">
        <Svg w={15} h={15}><path d="M5 14.500H.5V.5H6L7.500 2 9 .5h5.500V5" /><circle cx="9" cy="8" r="3.500" fill="#dfe3ea" /><path d="m11.500 10.500 3 4" /></Svg>
        内容检查<Caret />
      </button>
      <Divider className="h-5" />

      <div className="ml-auto flex items-center">
        <button aria-label="护眼模式"><Svg w={16} h={16}><path d="M.5 10Q8 2.500 15.500 10 8 17.500.5 10zM2 3.500l1.500 2M14 3.500l-1.500 2M8 0v3" /><circle cx="8" cy="10" r="3" /></Svg></button>
        <Divider className="ml-[13px] h-[14px]" />
        <button aria-label="页面视图" className="ml-3 flex h-6 w-6 items-center justify-center rounded-xs bg-[#dae0e7]">
          <Svg w={14} h={15}><path d="M.5.5h10l3 3v11H.5zM3.500 6.500h7M3.500 9.500h7" /></Svg>
        </button>
        <button aria-label="大纲" className="ml-[7px]"><Svg w={14} h={14}><path d="M0 1.500h2M4 1.500h10M3 5.500h2M7 5.500h7M3 9.500h2M7 9.500h7M0 13.500h2M4 13.500h10" /></Svg></button>
        <button aria-label="阅读版式" className="ml-[9px]"><BookOpen size={18} strokeWidth={1.4} /></button>
        <button aria-label="Web版式" className="ml-2"><Globe size={17} strokeWidth={1.4} /></button>
        <button aria-label="写作模式" className="ml-[10px]"><PencilLine size={17} strokeWidth={1.3} /></button>
        <Divider className="ml-[13px] h-[14px]" />
        <button aria-label="适应窗口" className="ml-[15px]"><Svg w={15} h={15}><path d="M.5 4V.5H4M11 .5h3.500V4M14.500 11v3.500H11M4 14.500H.5V11M4.500 4.500h6v6h-6z" /></Svg></button>
        <button className="ml-[6px] flex items-center gap-[5px] text-[13px]">112%<Caret /></button>
        <button aria-label="缩小" className="ml-3"><Svg w={10} h={12} sw={2}><path d="M0 6h10" /></Svg></button>
        <input
          type="range"
          aria-label="缩放"
          defaultValue={49}
          className="ml-3 h-3 w-[143px] appearance-none bg-[linear-gradient(to_right,#2f3b52_50%,#c9ced8_50%)] bg-[length:100%_1px] bg-center bg-no-repeat [&::-webkit-slider-thumb]:h-3 [&::-webkit-slider-thumb]:w-3 [&::-webkit-slider-thumb]:appearance-none [&::-webkit-slider-thumb]:rounded-full [&::-webkit-slider-thumb]:border [&::-webkit-slider-thumb]:border-[#2f3b52] [&::-webkit-slider-thumb]:bg-[#f5f7fa]"
        />
        <button aria-label="放大" className="ml-[7px]"><Svg w={10} h={10} sw={2}><path d="M5 0v10M0 5h10" /></Svg></button>
        <button aria-label="全屏" className="mr-4 ml-3"><Svg w={14} h={14} sw={1.3}><path d="M.5 4V.5H4M10 .5h3.500V4M13.500 10v3.500H10M4 13.500H.5V10M1 1l4 4M13 1 9 5M1 13l4-4M13 13 9 9" /></Svg></button>
      </div>
    </footer>
  )
}

function CellText({ x, y, w }: { x: number; y: number; w: number }) {
  return <path d={`M${x + w / 3} ${y}h${(w * 2) / 3}M${x} ${y + 4}h${w}`} stroke="#a6a6a6" strokeWidth="2" />
}

const presets = [
  { label: '无(N)', art: <path d="M12 6.500h14M6 10.500h20M6 14.500h20M6 18.500h20M6 22.500h20M6 26.500h14" stroke="#a6a6a6" strokeWidth="2" /> },
  {
    label: '方框(X)',
    art: <><rect x="6" y="6" width="20" height="21" stroke="#000" strokeWidth="2" /><path d="M17 9.500h7M8 13.500h16M8 17.500h16M8 21.500h9" stroke="#a6a6a6" strokeWidth="2" /></>,
  },
  {
    label: '全部(A)',
    art: (
      <>
        <CellText x={9} y={9} w={5} /><CellText x={18} y={9} w={5} /><CellText x={9} y={19} w={5} /><CellText x={18} y={19} w={5} />
        <path d="M6 6h20v21H6zM16 6v21M6 16.500h20" stroke="#000" strokeWidth="2" />
      </>
    ),
  },
  {
    label: '网格(D)',
    art: (
      <>
        <CellText x={9} y={9} w={5} /><CellText x={18} y={9} w={5} /><CellText x={9} y={19} w={5} /><CellText x={18} y={19} w={5} />
        <rect x="6" y="6" width="20" height="21" stroke="#000" strokeWidth="2" />
        <path d="M16.500 6v21M6 16.500h20" stroke="#000" />
      </>
    ),
  },
  {
    label: '自定义(U)',
    art: (
      <>
        <rect x="3" y="3" width="26" height="27" stroke="#2f6bc8" strokeWidth="2" />
        <path d="M5 5.500h20" stroke="#000" />
        <path d="m6 6 3 3-3 4 3 4-3 4" stroke="#000" />
        <path d="M26 5v23" stroke="#000" strokeWidth="2" />
        <path d="M7 27h18M9 25h16" stroke="#000" strokeWidth="2" strokeDasharray="2 2" />
        <path d="M14 9.500h9M11 13.500h12M11 17.500h12M11 21.500h9" stroke="#a6a6a6" strokeWidth="2" />
      </>
    ),
  },
]

const dashes = ['', '1 1', '4 1', '4 5', '8 4 3 4', '8 3 2 3 2 3']

function EdgeButton({ d, state, label }: { d: string; state: 'on' | 'off' | 'focus'; label: string }) {
  return (
    <button
      aria-label={label}
      className={clsx(
        'flex h-[21px] w-[21px] shrink-0 items-center justify-center',
        state === 'on' && 'border border-[#00549e] bg-[#cce4f7]',
        state === 'off' && 'border border-[#adadad] bg-[#e1e1e1]',
        state === 'focus' && 'border-2 border-[#0078d7] bg-[#e1e1e1]',
      )}
    >
      <Svg w={15} h={15} className="text-[#222]">
        <path d="M1 1.500h13M1 13.500h13M1.500 1v13M13.500 1v13M7.500 1v13M1 7.500h13" stroke="#777" strokeDasharray="1 1" />
        <path d={d} />
      </Svg>
    </button>
  )
}

function BlackCaret({ className }: { className?: string }) {
  return <svg width="7" height="4" viewBox="0 0 7 4" className={className}><path d="M0 0h7L3.500 4z" /></svg>
}

function PreviewText({ x, y }: { x: number; y: number }) {
  return <path d={`M${x + 18} ${y}h35M${x} ${y + 4}h53M${x} ${y + 8}h53M${x} ${y + 12}h53M${x} ${y + 16}h53M${x} ${y + 20}h53M${x} ${y + 24}h35`} stroke="#d0d0d0" strokeWidth="2" />
}

function BorderDialog() {
  return (
    <div role="dialog" aria-label="边框和底纹" className="absolute top-[271px] left-[687px] z-20 w-[518px] border border-[#6a6a6a] bg-[#f0f0f0] text-black">
      <div className="flex h-[25px] items-center gap-[5px] bg-white pl-[3px]">
        <WpsLogo />
        边框和底纹
        <button aria-label="关闭" className="mr-[9px] ml-auto"><Svg w={12} h={12}><path d="m.5.5 11 11M11.500.5l-11 11" /></Svg></button>
      </div>
      <div className="flex items-end px-[7px] pt-[6px]">
        <button className="relative z-10 -mb-px h-[26px] w-[65px] border border-b-0 border-[#dcdcdc] bg-white pr-0.5">边框(B)</button>
        <button className="h-6 w-[86px] border border-b-0 border-l-0 border-[#dcdcdc]">页面边框(P)</button>
        <button className="h-6 w-[62px] border border-b-0 border-l-0 border-[#dcdcdc]">底纹(S)</button>
      </div>
      <div className="mr-2 ml-[7px] flex h-[371px] border border-[#dcdcdc] bg-white pt-2 pb-[9px]">
        <div className="w-[117px] shrink-0 border-r border-[#a0a0a0] pl-[7px]">
          <div className="h-[22px] leading-4">设置:</div>
          <div className="ml-2 flex flex-col gap-[6px]">
            {presets.map((p) => (
              <button key={p.label} className="flex items-center gap-2 whitespace-nowrap">
                <svg width="34" height="35" fill="none" className="shrink-0 border border-[#7f9db9]" viewBox="0 0 32 33">{p.art}</svg>
                {p.label}
              </button>
            ))}
          </div>
        </div>

        <div className="w-[176px] shrink-0 border-r border-[#a0a0a0] pr-2 pl-4">
          <div className="h-[18px] leading-4">线型(Y):</div>
          <div className="flex h-[148px] border border-[#828790] p-px">
            <div className="flex flex-1 flex-col gap-1 overflow-hidden px-0.5 pt-0.5">
              {dashes.map((d, i) => (
                <button key={i} aria-label={`线型 ${i + 1}`} className={clsx('flex h-5 w-[126px] shrink-0 items-center justify-center border', i === 0 ? 'border-[#2f6bc8]' : 'border-transparent')}>
                  <svg width="101" height="1"><path d="M0 .5h101" stroke="#000" strokeDasharray={d} /></svg>
                </button>
              ))}
            </div>
            <div className="flex w-[15px] flex-col items-center bg-[#f0f0f0] py-[6px] text-[#505050]">
              <Svg w={8} h={6} sw={2}><path d="m0 5 4-4 4 4" /></Svg>
              <div className="mt-1 h-[27px] w-full bg-[#cdcdcd]" />
              <Svg w={8} h={6} sw={2} className="mt-auto"><path d="m0 1 4 4 4-4" /></Svg>
            </div>
          </div>
          <label className="mt-[7px] block h-[18px] leading-4" htmlFor="line-color">颜色(C):</label>
          <div className="relative">
            <select id="line-color" className="block h-[25px] w-full appearance-none border border-[#adadad] bg-[#e1e1e1] pl-[54px]"><option>自动</option></select>
            <BlackCaret className="pointer-events-none absolute top-[10px] right-[6px]" />
          </div>
          <label className="mt-[7px] block h-[18px] leading-4" htmlFor="line-width">宽度(W):</label>
          <div className="flex h-7 items-center border border-[#adadad] bg-[#e1e1e1] pr-[5px] pl-0.5">
            <div className="flex h-[22px] w-[130px] items-center bg-white pl-2">
              <select id="line-width" className="w-[42px] appearance-none bg-transparent whitespace-pre"><option>{'0.5\u00a0\u00a0\u00a0磅'}</option></select>
              <i className="h-px w-16 bg-black" />
            </div>
            <BlackCaret className="ml-auto" />
          </div>
        </div>

        <div className="flex-1 pr-[7px] pl-[9px]">
          <div className="leading-4">预览</div>
          <div className="h-[82px] pl-1 leading-[18px]">单击下方图示或按钮可设置边框</div>
          <div className="flex pl-px">
            <div className="flex flex-col gap-3">
              <EdgeButton label="上边框" state="on" d="M1 1.500h13" />
              <EdgeButton label="内部横线" state="on" d="M1 7.500h13" />
              <EdgeButton label="下边框" state="on" d="M1 13.500h13" />
            </div>
            <svg width="114" height="66" className="mt-[11px] ml-[30px]">
              <PreviewText x={1} y={4} /><PreviewText x={59} y={4} /><PreviewText x={1} y={36} /><PreviewText x={59} y={36} />
              <path d="M0 1.500h114M0 32.500h114M0 65.500h114M56.500 1v65" stroke="#000" />
            </svg>
          </div>
          <div className="mt-5 flex pl-px">
            <EdgeButton label="斜线" state="off" d="M1.500 13.500l12-12" />
            <span className="w-5" />
            <EdgeButton label="左边框" state="off" d="M1.500 1v13" />
            <span className="w-[14px]" />
            <EdgeButton label="内部竖线" state="on" d="M7.500 1v13" />
            <span className="w-[14px]" />
            <EdgeButton label="右边框" state="focus" d="M13.500 1v13" />
            <span className="w-5" />
            <EdgeButton label="反斜线" state="off" d="M1.500 1.500l12 12" />
          </div>
          <label className="mt-[46px] block h-5 leading-[18px]" htmlFor="apply-to">应用于(L):</label>
          <div className="relative">
            <select id="apply-to" className="block h-[23px] w-full appearance-none border border-[#adadad] bg-[#e1e1e1] pl-[3px]"><option>表格</option></select>
            <BlackCaret className="pointer-events-none absolute top-[9px] right-[6px]" />
          </div>
          <button disabled className="mt-[7px] ml-auto block h-[30px] w-[77px] border border-[#bfbfbf] bg-[#cccccc] text-[#a0a0a0]">选项(O)...</button>
        </div>
      </div>
      <div className="flex h-[46px] items-center pr-2 pl-[7px]">
        <a href="#tips" className="ml-1 flex items-center gap-[6px] text-[#4a90f4]">
          <Svg w={14} h={14}><circle cx="7" cy="7" r="6.500" stroke="#5b6472" /><path d="M5.500 4v6l4-3z" /></Svg>
          操作技巧
        </a>
        <button className="ml-auto h-[30px] w-[77px] border border-[#adadad] bg-[#e1e1e1]">确定</button>
        <button className="ml-2 h-[30px] w-[77px] border border-[#adadad] bg-[#e1e1e1]">取消</button>
      </div>
    </div>
  )
}

function Arrow({ x, y, angle, length }: { x: number; y: number; angle: number; length: number }) {
  return (
    <g transform={`translate(${x} ${y}) rotate(${angle})`}>
      <path d={`M0 0 8 22 1.500 19V${length}h-3V19L-8 22z`} fill="#fe0000" />
    </g>
  )
}

function Annotations() {
  return (
    <svg width="220" height="240" className="pointer-events-none absolute top-[480px] left-[1000px] z-30 drop-shadow-[3px_3px_2px_rgba(0,0,0,0.5)]">
      <Arrow x={40} y={24} angle={23} length={54} />
      <Arrow x={170} y={7} angle={-33} length={63} />
      <Arrow x={59} y={223} angle={168} length={54} />
    </svg>
  )
}

function Watermark() {
  return (
    <div className="pointer-events-none absolute right-[9px] bottom-1 z-30 flex items-center font-bold opacity-90">
      <svg width="45" height="42" viewBox="0 0 45 42">
        <path d="M45 1Q24-1 11 10-4 22 3 32q6 6 16 2 8-4 7-11-2-6-9-3-5 3-3 7-6-1-4-7Q14 8 45 1z" fill="#5aa0dc" />
        <path d="M28 14q13 0 14 10-1 14-32 17 20-6 22-16 0-7-4-11z" fill="#5dbb6c" />
        <path d="M4 39q20 0 28-10-3 11-22 12z" fill="#cfe04a" />
      </svg>
      <div>
        <div className="text-[21px] leading-6 text-[#6ea0d8]">极光下载站</div>
        <div className="text-base leading-5 font-semibold text-[#5dc07c]">www.xz7.com</div>
      </div>
    </div>
  )
}

export default function App() {
  return (
    <div className="relative flex h-screen w-full flex-col overflow-hidden bg-[#f5f7fa] font-['Open_Sans','Noto_Sans_CJK_SC',sans-serif] text-xs text-[#232d42]">
      <header className="z-10 shrink-0 bg-white whitespace-nowrap shadow-[0_1px_5px_rgba(0,0,0,0.2)]">
        <TitleBar />
        <MenuBar />
        <Ribbon />
      </header>
      <main className="flex min-h-0 flex-1">
        <VerticalRuler />
        <DocumentArea />
        <ScrollBar />
        <TaskPane />
        <SideStrip />
      </main>
      <StatusBar />
      <BorderDialog />
      <Annotations />
      <div className="absolute top-[780px] right-0 z-30 flex h-[59px] w-[10px] flex-col items-end justify-center gap-px rounded-l-sm bg-[#454a59] pr-0.5">
        {['#2b2e38', '#2b2e38', '#2b2e38', '#e8a860', '#e8c860', '#e8dc6c', '#d8e070', '#c8e078', '#a8e088', '#98e098', '#88e0a0', '#78dcb0', '#70d8c0', '#68d4cc'].map((c, i) => (
          <i key={i} className="h-0.5 w-1" style={{ background: c }} />
        ))}
      </div>
      <Watermark />
    </div>
  )
}
